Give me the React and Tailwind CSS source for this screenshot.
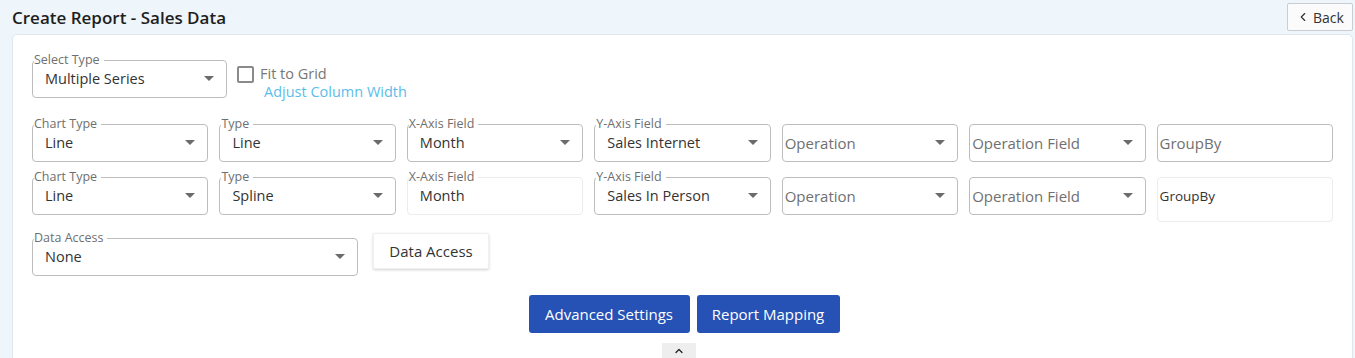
import React from 'react';
import { ChevronLeft, ChevronUp } from 'lucide-react';

const Caret = () => (
    <svg width="10" height="6" viewBox="0 0 10 6" className="absolute right-[12px] top-1/2 -translate-y-1/2">
        <path d="M0 0 L10 0 L5 5 Z" fill="#6b6b6b" />
    </svg>
);

const Field = ({ label, value, placeholder, select = true, faint = false, tall = false }) => (
    <div className={`relative ${tall ? 'h-[45px] pb-[7px]' : 'h-[38px]'} rounded-[4px] border ${faint ? 'border-[#ececec]' : 'border-[#bdbdbd]'} bg-white flex items-center`}>
        {label && (
            <span className="absolute -top-[8px] left-[1px] bg-white pr-[4px] text-[12.5px] leading-[13px] text-[#6f6f6f]">{label}</span>
        )}
        {value && <span className="pl-[12px] text-[14.5px] text-[#333]">{value}</span>}
        {placeholder && <span className={`pl-[2px] ${tall ? 'text-[13.5px] text-[#333]' : 'text-[15px] text-[#707070]'}`}>{placeholder}</span>}
        {select && <Caret />}
    </div>
);

const App = () => {
    return (
        <div className="w-[1355px] h-[358px] overflow-hidden bg-[#eef5fb] font-['Open_Sans',sans-serif] text-[#222]">
            <div className="flex items-center justify-between pl-[12px] pr-[2px] pt-[3px] h-[34px]">
                <h1 className="text-[17px] font-semibold text-[#1e1e1e] -mt-[2px]">Create Report - Sales Data</h1>
                <button className="h-[28px] w-[66px] -mt-[3px] flex items-center justify-center gap-[3px] rounded-[2px] border border-[#c9cdd1] bg-[#fbfbfb] text-[14px] text-[#333]">
                    <ChevronLeft className="w-[14px] h-[14px]" strokeWidth={2} />
                    Back
                </button>
            </div>
            <div className="ml-[12px] mr-[2px] h-[340px] rounded-[5px] border border-[#dfe7ee] bg-white px-[19px] pt-[25px]">
                <div className="flex items-start h-[38px]">
                    <div className="w-[195px]">
                        <Field label="Select Type" value="Multiple Series" />
                    </div>
                    <div className="ml-[10px] mt-[5px]">
                        <div className="flex items-center gap-[6px]">
                            <span className="w-[17px] h-[17px] rounded-[2px] border-2 border-[#8a8a8a]"></span>
                            <span className="text-[14.5px] leading-[18px] text-[#777]">Fit to Grid</span>
                        </div>
                        <div className="pl-[27px] text-[14.5px] leading-[17px] text-[#5bbdec]">Adjust Column Width</div>
                    </div>
                </div>

                <div className="mt-[26px] grid grid-cols-7 gap-x-[11px]">
                    <Field label="Chart Type" value="Line" />
                    <Field label="Type" value="Line" />
                    <Field label="X-Axis Field" value="Month" />
                    <Field label="Y-Axis Field" value="Sales Internet" />
                    <Field placeholder="Operation" />
                    <Field placeholder="Operation Field" />
                    <Field placeholder="GroupBy" select={false} />
                </div>
                <div className="mt-[15px] grid grid-cols-7 gap-x-[11px] items-start">
                    <Field label="Chart Type" value="Line" />
                    <Field label="Type" value="Spline" />
                    <Field label="X-Axis Field" value="Month" select={false} faint />
                    <Field label="Y-Axis Field" value="Sales In Person" />
                    <Field placeholder="Operation" />
                    <Field placeholder="Operation Field" />
                    <Field placeholder="GroupBy" select={false} faint tall />
                </div>

                <div className="mt-[11px] flex items-start gap-[15px]">
                    <div className="w-[326px] mt-[5px]">
                        <Field label="Data Access" value="None" />
                    </div>
                    <button className="h-[36px] w-[116px] rounded-[2px] bg-white text-[15px] text-[#333] shadow-[0_1px_3px_rgba(0,0,0,0.18)] border border-[#f0f0f0]">
                        Data Access
                    </button>
                </div>

                <div className="mt-[19px] flex justify-center gap-[7px] pl-[3px]">
                    <button className="h-[38px] w-[161px] rounded-[3px] bg-[#2651b5] text-[15px] font-medium text-white">Advanced Settings</button>
                    <button className="h-[38px] w-[143px] rounded-[3px] bg-[#2651b5] text-[15px] font-medium text-white">Report Mapping</button>
                </div>
                <div className="mt-[10px] flex justify-center pr-[8px]">
                    <div className="w-[34px] h-[16px] bg-[#eeeeee] flex items-center justify-center">
                        <ChevronUp className="w-[12px] h-[12px] text-[#222]" strokeWidth={2.5} />
                    </div>
                </div>
            </div>
        </div>
    );
};

export default App;
